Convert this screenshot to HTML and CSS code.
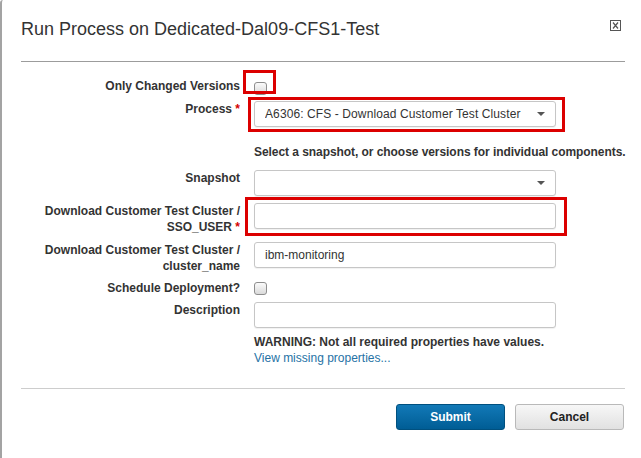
FILE: index.html
```html
<!DOCTYPE html>
<html>
<head>
<meta charset="utf-8">
<link rel="stylesheet" href="styles.css">
</head>
<body>
<div class="dialog">
  <div class="header">
    <h1 class="title">Run Process on Dedicated-Dal09-CFS1-Test</h1>
    <span class="close" title="Close">
      <svg width="11" height="11" viewBox="0 0 11 11"><rect x="0.5" y="0.5" width="10" height="10" fill="none" stroke="#555" stroke-width="1"/><path d="M3 2.5 L8 8.5 M8 2.5 L3 8.5" stroke="#555" stroke-width="1.2" fill="none"/></svg>
    </span>
  </div>
  <div class="rule"></div>

  <div class="form">
    <div class="row row-first">
      <div class="label">Only Changed Versions</div>
      <div class="control">
        <span class="mark-wrap"><span class="checkbox"></span><span class="mark mark-check"></span></span>
      </div>
    </div>
    <div class="row row-process">
      <div class="label">Process <span class="req">*</span></div>
      <div class="control">
        <div class="mark-wrap block">
          <div class="select"><span class="select-text">A6306: CFS - Download Customer Test Cluster</span><span class="caret"></span></div>
          <span class="mark mark-process"></span>
        </div>
      </div>
    </div>
    <div class="row row-help">
      <div class="label"></div>
      <div class="control help">Select a snapshot, or choose versions for individual components.</div>
    </div>
    <div class="row row-snapshot">
      <div class="label">Snapshot</div>
      <div class="control">
        <div class="select"><span class="select-text"></span><span class="caret"></span></div>
      </div>
    </div>
    <div class="row row-sso">
      <div class="label">Download Customer Test Cluster /<br>SSO_USER <span class="req">*</span></div>
      <div class="control">
        <div class="mark-wrap block">
          <div class="input"></div>
          <span class="mark mark-sso"></span>
        </div>
      </div>
    </div>
    <div class="row row-cluster">
      <div class="label">Download Customer Test Cluster /<br>cluster_name</div>
      <div class="control">
        <div class="input">ibm-monitoring</div>
      </div>
    </div>
    <div class="row row-schedule">
      <div class="label">Schedule Deployment?</div>
      <div class="control"><span class="checkbox"></span></div>
    </div>
    <div class="row row-desc">
      <div class="label">Description</div>
      <div class="control">
        <div class="input"></div>
        <div class="warning">WARNING: Not all required properties have values.</div>
        <a class="link" href="#">View missing properties...</a>
      </div>
    </div>
  </div>

  <div class="rule rule-bottom"></div>
  <div class="buttons">
    <button class="btn btn-primary">Submit</button>
    <button class="btn btn-default">Cancel</button>
  </div>
</div>
</body>
</html>
```
FILE: styles.css
```css
* { box-sizing: border-box; }
html, body { margin: 0; padding: 0; background: #fff; }
body {
  font-family: "Liberation Sans", Arial, sans-serif;
  color: #333;
  width: 641px;
  height: 458px;
  overflow: hidden;
}
.dialog {
  height: 458px;
  border-left: 2px solid #a3a3a3;
  border-top-left-radius: 3px;
  padding: 18px 16px 0 19px;
}
.header {
  display: flex;
  justify-content: space-between;
  align-items: flex-start;
}
.title {
  margin: 0;
  font-weight: normal;
  font-size: 18px;
  line-height: 22px;
  color: #333;
}
.close {
  display: block;
  width: 11px;
  height: 11px;
  margin: 2px 4px 0 0;
}
.close svg { display: block; }
.rule {
  margin-top: 21px;
  border-top: 1px solid #9c9c9c;
}
.rule-bottom {
  margin-top: 0;
  border-top-color: #cdcdcd;
}
.form { padding-top: 16px; height: 326px; }
.row {
  display: grid;
  grid-template-columns: 219px 302px;
  column-gap: 14px;
}
.label {
  font-weight: bold;
  font-size: 12px;
  line-height: 16px;
  text-align: right;
  color: #333;
}
.req { color: #d40000; }
.control { font-size: 12px; line-height: 16px; }
.row-first { height: 23px; }
.row-process { margin-top: 0; }
.row-help { margin-top: 17px; }
.row-snapshot { margin-top: 10px; }
.row-sso { margin-top: 7px; }
.row-cluster { margin-top: 7px; }
.row-schedule { margin-top: 6px; }
.row-desc { margin-top: 6px; }

.mark-wrap { position: relative; display: inline-block; }
.mark-wrap.block { display: block; }
.mark {
  position: absolute;
  border: 3px solid #dc0000;
  pointer-events: none;
}
.mark-check { left: -11px; top: -8px; width: 33px; height: 24px; }
.mark-process { left: -6px; top: -4px; right: -9px; bottom: -5px; }
.mark-sso { left: -9px; top: -6px; right: -11px; bottom: -7px; }

.checkbox {
  display: block;
  width: 13px;
  height: 13px;
  margin-top: 4px;
  border: 1px solid #8e8e8e;
  border-radius: 3px;
  background: linear-gradient(#fbfbfb, #dadada);
}
.row-schedule .checkbox { margin-top: 2px; }

.select, .input {
  height: 26px;
  border: 1px solid #c6c6c6;
  border-radius: 3px;
  background: #fff;
  box-shadow: 0 1px 1px rgba(0,0,0,0.06);
  font-size: 12px;
  line-height: 24px;
  color: #333;
  padding-left: 10px;
}
.select {
  display: flex;
  justify-content: space-between;
  align-items: center;
  padding-right: 10px;
}
.select-text { white-space: nowrap; overflow: hidden; letter-spacing: 0.1px; }
.caret {
  width: 0;
  height: 0;
  border-left: 4px solid transparent;
  border-right: 4px solid transparent;
  border-top: 4px solid #555;
  flex: none;
}
.help {
  font-weight: bold;
  white-space: nowrap;
  color: #333;
  letter-spacing: -0.06px;
}
.warning {
  margin-top: 6px;
  font-weight: bold;
  color: #333;
}
.link {
  display: block;
  color: #2672a5;
  text-decoration: none;
}
.buttons {
  display: flex;
  justify-content: flex-end;
  gap: 10px;
  padding-top: 15px;
  padding-right: 1px;
}
.btn {
  width: 109px;
  height: 26px;
  border-radius: 3px;
  font-family: "Liberation Sans", Arial, sans-serif;
  font-size: 12px;
  font-weight: bold;
  padding: 0;
}
.btn-primary {
  color: #fff;
  border: 1px solid #00507f;
  background: linear-gradient(#1279b7, #005d95);
}
.btn-default {
  color: #222;
  border: 1px solid #b9b9b9;
  background: linear-gradient(#f7f7f7, #e1e1e1);
}
```
